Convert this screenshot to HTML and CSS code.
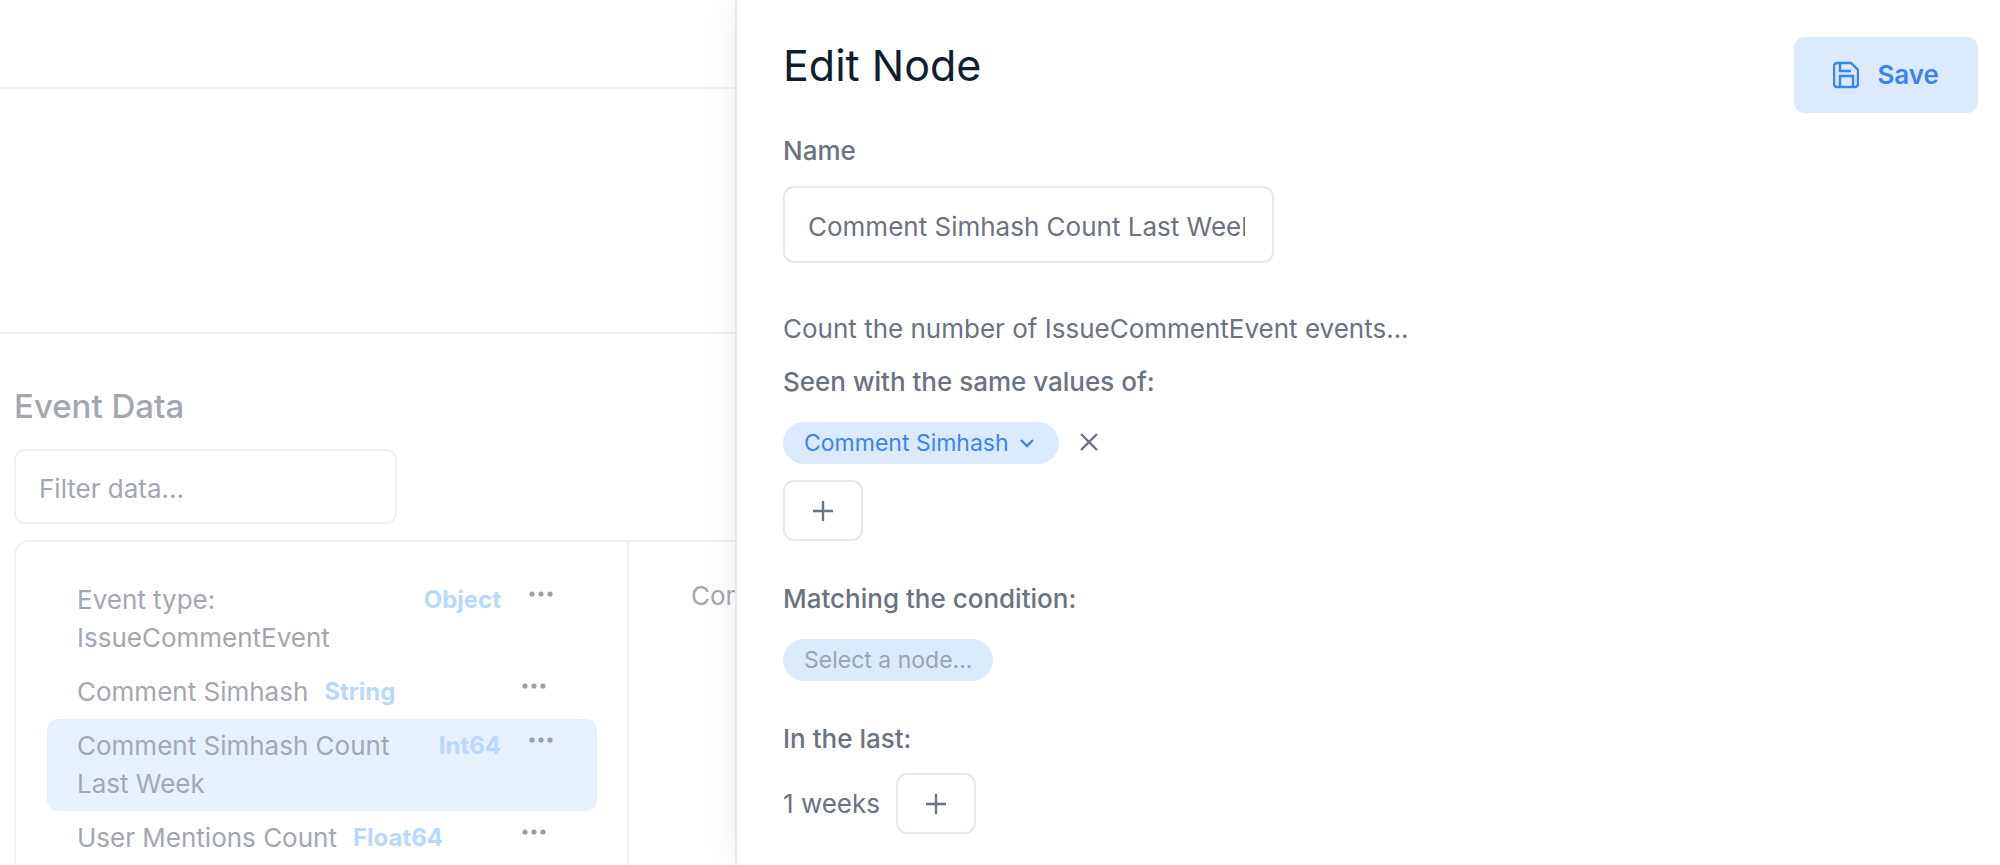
FILE: index.html
```html
<!DOCTYPE html>
<html lang="en">
<head>
    <meta charset="UTF-8">
    <meta name="viewport" content="width=device-width, initial-scale=1.0">
    <title>Edit Node</title>
    <link rel="stylesheet" href="styles.css">
</head>
<body>
    <main class="page">
        <div class="topbar"></div>
        <div class="toolbar"></div>
        <section class="event-data">
            <h2>Event Data</h2>
            <input type="text" class="text-input filter" placeholder="Filter data..." aria-label="Filter data">
            <div class="data-panel">
                <ul class="node-list">
                    <li class="node wrapped">
                        <span class="node-name">Event type: IssueCommentEvent</span>
                        <span class="node-type">Object</span>
                        <button class="menu-btn" aria-label="More">
                            <svg width="24" height="6" viewBox="0 0 24 6"><circle cx="3" cy="3" r="2.6"/><circle cx="12" cy="3" r="2.6"/><circle cx="21" cy="3" r="2.6"/></svg>
                        </button>
                    </li>
                    <li class="node">
                        <span class="node-name">Comment Simhash</span>
                        <span class="node-type">String</span>
                        <button class="menu-btn" aria-label="More">
                            <svg width="24" height="6" viewBox="0 0 24 6"><circle cx="3" cy="3" r="2.6"/><circle cx="12" cy="3" r="2.6"/><circle cx="21" cy="3" r="2.6"/></svg>
                        </button>
                    </li>
                    <li class="node wrapped selected">
                        <span class="node-name">Comment Simhash Count Last Week</span>
                        <span class="node-type">Int64</span>
                        <button class="menu-btn" aria-label="More">
                            <svg width="24" height="6" viewBox="0 0 24 6"><circle cx="3" cy="3" r="2.6"/><circle cx="12" cy="3" r="2.6"/><circle cx="21" cy="3" r="2.6"/></svg>
                        </button>
                    </li>
                    <li class="node">
                        <span class="node-name">User Mentions Count</span>
                        <span class="node-type">Float64</span>
                        <button class="menu-btn" aria-label="More">
                            <svg width="24" height="6" viewBox="0 0 24 6"><circle cx="3" cy="3" r="2.6"/><circle cx="12" cy="3" r="2.6"/><circle cx="21" cy="3" r="2.6"/></svg>
                        </button>
                    </li>
                </ul>
                <div class="node-values">Com</div>
            </div>
        </section>
    </main>

    <aside class="drawer">
        <div class="drawer-body">
            <h1>Edit Node</h1>
            <label class="label" for="nodeName">Name</label>
            <input type="text" class="text-input name-input" id="nodeName" value="Comment Simhash Count Last Week">

            <p class="summary">Count the number of IssueCommentEvent events...</p>
            <h3 class="label">Seen with the same values of:</h3>
            <div class="chip-row">
                <button class="chip">
                    Comment Simhash
                    <svg width="14" height="16" viewBox="1 0 14 16"><path d="M2 5l6 6 6-6"/></svg>
                </button>
                <button class="remove-btn" aria-label="Remove">
                    <svg width="20" height="20" viewBox="0 0 20 20"><path d="M2 1l16 16M18 1L2 17"/></svg>
                </button>
            </div>
            <button class="add-btn" aria-label="Add value">
                <svg width="22" height="22" viewBox="0 0 22 22"><path d="M11 1v20M1 11h20"/></svg>
            </button>

            <h3 class="label section">Matching the condition:</h3>
            <div class="chip-row">
                <button class="chip empty">Select a node...</button>
            </div>

            <h3 class="label section">In the last:</h3>
            <div class="duration">
                <span>1 weeks</span>
                <button class="add-btn" aria-label="Add duration">
                    <svg width="22" height="22" viewBox="0 0 22 22"><path d="M11 1v20M1 11h20"/></svg>
                </button>
            </div>
        </div>
        <button class="save-btn">
            <svg width="26" height="28" viewBox="1 0 26 28"><path d="M5 2h14l7 7v14a3 3 0 0 1-3 3H5a3 3 0 0 1-3-3V5a3 3 0 0 1 3-3M8 2v8h11M8 26V15h13v11"/></svg>
            Save
        </button>
    </aside>
</body>
</html>
```
FILE: styles.css
```css
* {
    box-sizing: border-box;
}
body {
    margin: 0;
    display: flex;
    height: 100vh;
    font-family: Inter, "Liberation Sans", sans-serif;
    font-size: 26px;
    line-height: 38px;
    color: #6b7280;
    background-color: #fff;
}
h1, h2, h3, p, ul {
    margin: 0;
    padding: 0;
}
button {
    font: inherit;
    color: inherit;
    background: none;
    border: none;
    padding: 0;
    cursor: pointer;
}
svg {
    display: block;
    flex: none;
    fill: none;
    stroke: currentColor;
    stroke-width: 2.4;
}
.page {
    flex: 1;
    min-width: 0;
    display: flex;
    flex-direction: column;
    overflow: hidden;
    color: #a3a7b0;
}
.topbar {
    flex: none;
    height: 89px;
    border-bottom: 2px solid #f1f1f4;
}
.toolbar {
    flex: none;
    height: 245px;
    border-bottom: 2px solid #f1f1f4;
}
.event-data {
    flex: 1;
    display: flex;
    flex-direction: column;
    align-items: flex-start;
    min-height: 0;
    padding: 47px 0 0 14px;
}
.event-data h2 {
    font-size: 33px;
    line-height: 50px;
    font-weight: 500;
    margin-bottom: 18px;
}
.text-input {
    display: block;
    height: 77px;
    padding: 4px 23px 0;
    border: 2px solid #e5e7eb;
    border-radius: 11px;
    font: inherit;
    color: inherit;
    background-color: #fff;
}
.name-input {
    width: 491px;
    margin-top: 16px;
    padding-right: 27px;
}
.filter {
    width: 383px;
    border-color: #f1f1f4;
}
.filter::placeholder {
    color: #a3a7b0;
    opacity: 1;
}
.data-panel {
    flex: 1;
    display: flex;
    align-self: stretch;
    margin-top: 16px;
    border: 2px solid #f1f1f4;
    border-width: 2px 0 0 2px;
    border-radius: 15px 0 0 0;
}
.node-list {
    flex: none;
    width: 613px;
    padding: 31px 30px 0 31px;
    border-right: 2px solid #f1f1f4;
    list-style: none;
}
.node {
    display: flex;
    align-items: flex-start;
    padding: 8px 30px;
    border-radius: 11px;
}
.node.selected {
    background-color: #e7f1fe;
}
.wrapped .node-name {
    flex: 1;
}
.node-type {
    margin: 0 14px 0 16px;
    font-size: 24px;
    font-weight: 700;
    color: #b7d8ff;
}
.menu-btn {
    display: flex;
    justify-content: center;
    width: 66px;
    margin-left: auto;
    padding-top: 10px;
    color: #9a9ea8;
}
.menu-btn svg {
    fill: currentColor;
    stroke: none;
}
.wrapped .menu-btn {
    width: 52px;
}
.node-values {
    padding: 35px 0 35px 62px;
}

/* Drawer over the page */
.drawer {
    position: relative;
    flex: none;
    width: 63.25%;
    display: flex;
    align-items: flex-start;
    justify-content: space-between;
    padding: 37px 22px 0 46px;
    border-left: 2px solid #e5e7eb;
    background-color: #fff;
    box-shadow: 0 0 34px rgba(0, 0, 0, 0.07);
}
.drawer-body {
    display: flex;
    flex-direction: column;
    align-items: flex-start;
}
h1 {
    font-size: 43px;
    line-height: 56px;
    font-weight: 400;
    color: #111e30;
    margin-bottom: 39px;
}
.label {
    font-size: 26px;
    line-height: 38px;
    font-weight: 500;
}
.summary {
    margin: 47px 0 15px;
}
.chip-row {
    display: flex;
    align-items: center;
    gap: 20px;
    margin-top: 21px;
}
.chip {
    display: flex;
    align-items: center;
    gap: 11px;
    height: 42px;
    padding: 0 21px;
    border-radius: 21px;
    font-size: 23px;
    color: #3b82f6;
    background-color: #dbeafe;
}
.chip svg {
    margin-right: 4px;
}
.chip.empty {
    color: #9ca3af;
}
.add-btn {
    display: flex;
    align-items: center;
    justify-content: center;
    width: 80px;
    height: 61px;
    border: 2px solid #e5e7eb;
    border-radius: 11px;
}
.chip-row + .add-btn {
    margin-top: 16px;
}
.section {
    margin-top: 39px;
}
.duration {
    display: flex;
    align-items: center;
    gap: 16px;
    margin-top: 15px;
}
.save-btn {
    display: flex;
    align-items: center;
    gap: 18px;
    height: 76px;
    padding: 0 39px;
    border-radius: 11px;
    font-weight: 600;
    color: #3b82f6;
    background-color: #dbeafe;
}
```
